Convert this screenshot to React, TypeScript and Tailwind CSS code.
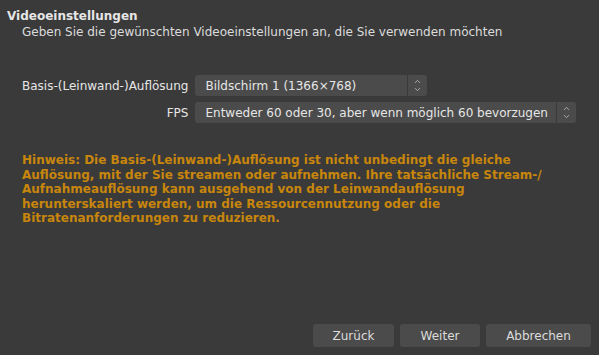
import { ChevronUp, ChevronDown } from "lucide-react";

function SelectBox({ value, width }: { value: string; width: string }) {
  return (
    <div className={`flex h-[21px] items-stretch rounded-[3px] bg-[#4b4b4b] ${width}`}>
      <div className="flex flex-1 items-center pl-[10px] text-[12px] text-[#e6e6e6] whitespace-nowrap">{value}</div>
      <div className="flex w-[20px] flex-col items-center justify-center border-l border-[#3a3a3a]">
        <ChevronUp size={9} strokeWidth={2} className="text-[#c8c8c8] -mb-[1px]" />
        <ChevronDown size={9} strokeWidth={2} className="text-[#c8c8c8]" />
      </div>
    </div>
  );
}

function Button({ label, width }: { label: string; width: string }) {
  return (
    <button className={`h-[23px] rounded-[3px] bg-[#4b4b4b] text-[12px] text-[#dcdcdc] ${width}`}>{label}</button>
  );
}

export default function App() {
  return (
    <div
      className="flex h-[355px] w-[599px] flex-col bg-[#3a3a3a] text-[#e6e6e6]"
      style={{ fontFamily: '"DejaVu Sans", sans-serif' }}
    >
      <div className="px-[7px] pt-[8px]">
        <div className="text-[12px] font-bold leading-[16px]">Videoeinstellungen</div>
        <div className="pl-[15px] text-[12px] leading-[16px] text-[#dcdcdc]">
          Geben Sie die gewünschten Videoeinstellungen an, die Sie verwenden möchten
        </div>
      </div>

      <div className="mt-[35px] grid grid-cols-[auto_1fr] items-center gap-x-[7px] gap-y-[6px] pl-[22px] pr-[23px]">
        <div className="text-right text-[12px] text-[#e6e6e6]">Basis-(Leinwand-)Auflösung</div>
        <SelectBox value="Bildschirm 1 (1366×768)" width="w-[232px]" />
        <div className="text-right text-[12px] text-[#e6e6e6]">FPS</div>
        <SelectBox value="Entweder 60 oder 30, aber wenn möglich 60 bevorzugen" width="w-full" />
      </div>

      <div className="mt-[30px] pl-[22px] pr-[10px] text-[12px] font-bold leading-[14.6px] text-[#c8860c] whitespace-nowrap">
        Hinweis: Die Basis-(Leinwand-)Auflösung ist nicht unbedingt die gleiche
        <br />
        Auflösung, mit der Sie streamen oder aufnehmen. Ihre tatsächliche Stream-/
        <br />
        Aufnahmeauflösung kann ausgehend von der Leinwandauflösung
        <br />
        herunterskaliert werden, um die Ressourcennutzung oder die
        <br />
        Bitratenanforderungen zu reduzieren.
      </div>

      <div className="mt-auto flex justify-end gap-[6px] pb-[8px] pr-[8px]">
        <Button label="Zurück" width="w-[81px]" />
        <Button label="Weiter" width="w-[80px]" />
        <Button label="Abbrechen" width="w-[105px]" />
      </div>
    </div>
  );
}
